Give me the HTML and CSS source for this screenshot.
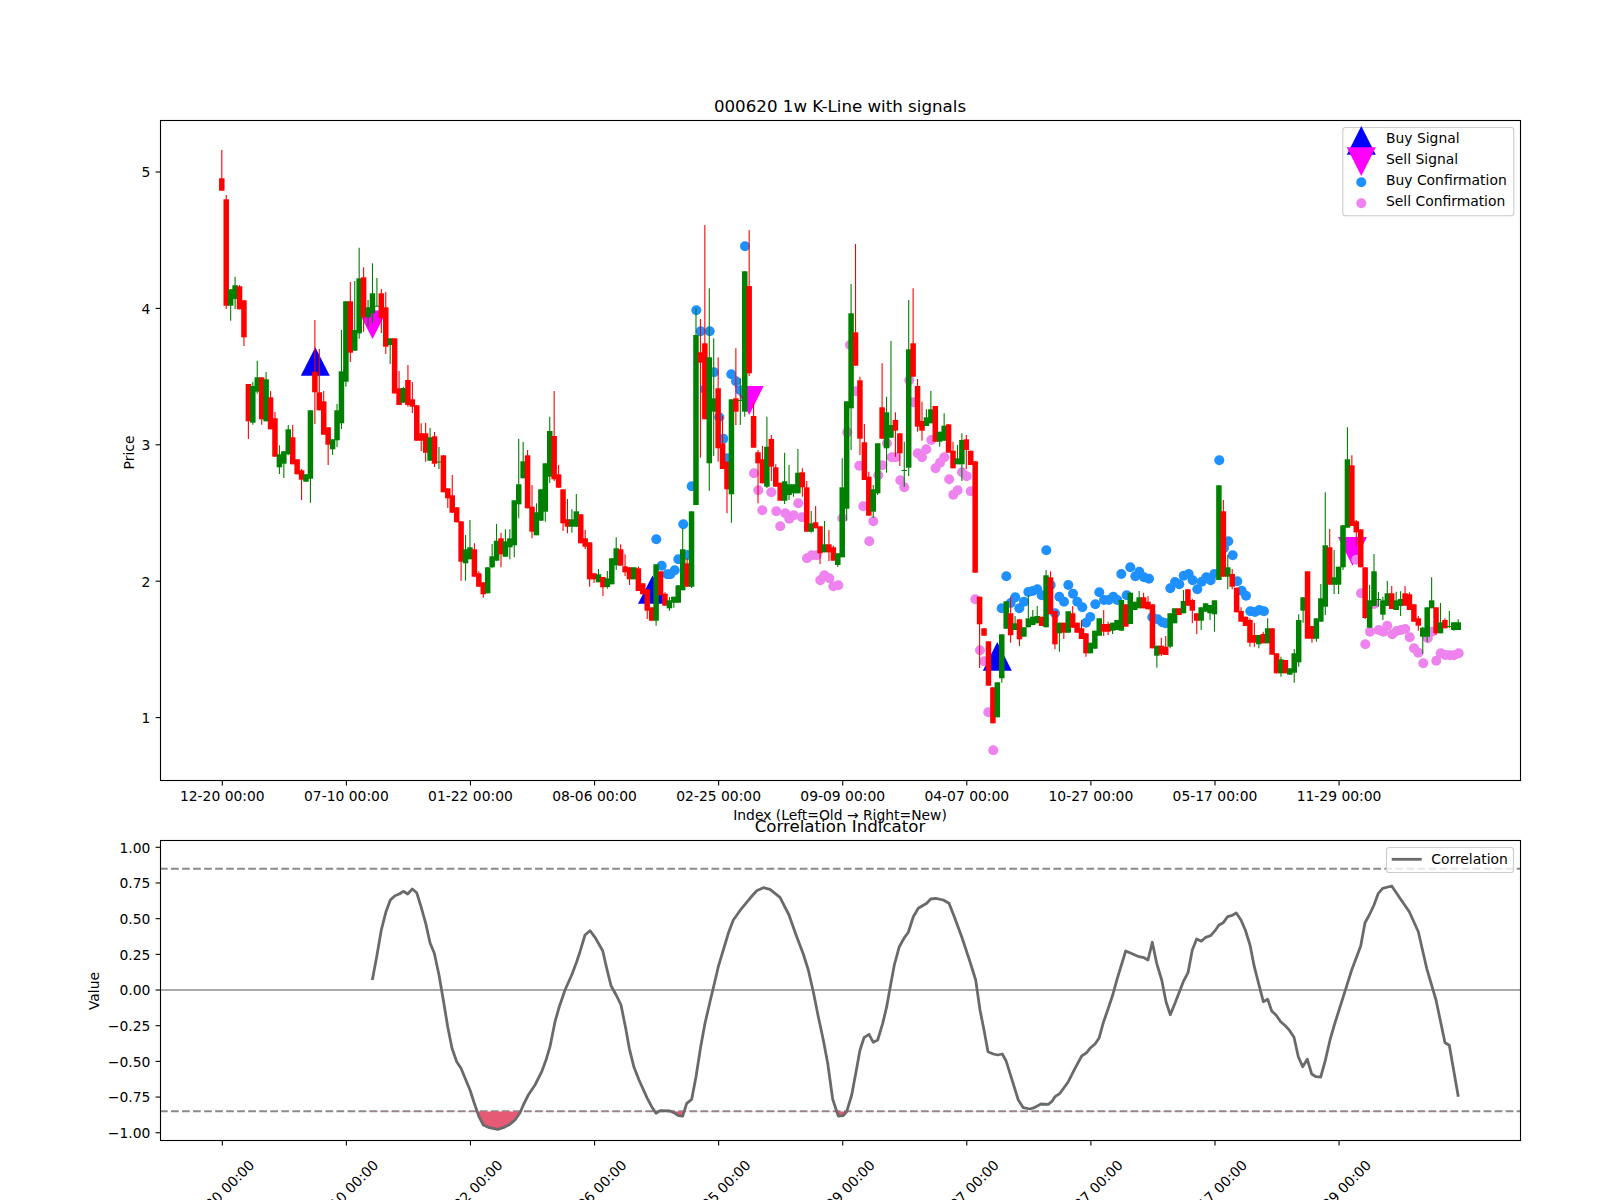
FILE: index.html
```html
<!DOCTYPE html>
<html lang="en">
<head>
<meta charset="utf-8">
<title>000620 1w K-Line with signals</title>
<link rel="stylesheet" href="styles.css">
</head>
<body>
<svg class="figure" id="figure" xmlns="http://www.w3.org/2000/svg" width="1600" height="1200" viewBox="0 0 1600 1200">
  <defs>
    <clipPath id="below-band"><rect x="160" y="1111.3" width="1360" height="29"></rect></clipPath>
  </defs>

  <g id="price-axes">
    <g id="signals"></g>
    <g id="confirmations"></g>
    <g id="candles"></g>
    <rect class="frame" x="160.5" y="120.5" width="1360" height="660"></rect>
    <g id="price-ticks"></g>
    <text class="title" x="840" y="112">000620 1w K-Line with signals</text>
    <text class="label centered" x="840" y="820">Index (Left=Old → Right=New)</text>
    <text class="label centered" transform="translate(133.5 452.5) rotate(-90)">Price</text>
    <g class="legend">
      <rect class="legend-box" x="1342.8" y="127.5" width="171" height="88.2" rx="2.8"></rect>
      <polygon class="buy" points="1361.3,126 1375.8,154.7 1346.8,154.7"></polygon>
      <polygon class="sell" points="1346.8,147.3 1375.8,147.3 1361.3,176"></polygon>
      <circle class="buy-dot" cx="1361.3" cy="182.3" r="5"></circle>
      <circle class="sell-dot" cx="1361.3" cy="203.3" r="5"></circle>
      <text class="label" x="1386" y="143">Buy Signal</text>
      <text class="label" x="1386" y="164">Sell Signal</text>
      <text class="label" x="1386" y="185">Buy Confirmation</text>
      <text class="label" x="1386" y="206">Sell Confirmation</text>
    </g>
  </g>

  <g id="corr-axes">
    <line class="zero" x1="160" y1="990" x2="1520" y2="990"></line>
    <line class="band" x1="160" y1="868.7" x2="1520" y2="868.7"></line>
    <line class="band" x1="160" y1="1111.3" x2="1520" y2="1111.3"></line>
    <path id="corr-fill" class="corr-fill" clip-path="url(#below-band)"></path>
    <path id="corr-line" class="corr-line"></path>
    <rect class="frame" x="160.5" y="840.5" width="1360" height="300"></rect>
    <g id="corr-ticks"></g>
    <text class="title" x="840" y="832">Correlation Indicator</text>
    <text class="label centered" transform="translate(98.5 991) rotate(-90)">Value</text>
    <g class="legend">
      <rect class="legend-box" x="1386.5" y="847.5" width="127" height="25" rx="2.8"></rect>
      <line class="corr-line" x1="1391.7" y1="859.3" x2="1421.7" y2="859.3"></line>
      <text class="label" x="1431.3" y="864">Correlation</text>
    </g>
  </g>
</svg>
<script src="script.js"></script>
</body>
</html>
```
FILE: styles.css
```css
html, body {
  margin: 0;
  padding: 0;
  background: #ffffff;
}
.figure {
  display: block;
  width: 1600px;
  height: 1200px;
  overflow: hidden;
}
.frame {
  fill: none;
  stroke: #000000;
  stroke-width: 1.1;
}
.tick {
  stroke: #000000;
  stroke-width: 1.1;
}
.title, .label, .tick-label {
  font-family: "DejaVu Sans", sans-serif;
  fill: #000000;
}
.title {
  font-size: 16.67px;
  text-anchor: middle;
}
.label, .tick-label {
  font-size: 13.89px;
}
.centered {
  text-anchor: middle;
}
.tick-label-x {
  text-anchor: middle;
}
.tick-label-y {
  text-anchor: end;
}
.legend-box {
  fill: #ffffff;
  fill-opacity: 0.8;
  stroke: #cccccc;
  stroke-width: 1.1;
}
.buy { fill: #0000ff; }
.sell { fill: #ff00ff; }
.buy-dot { fill: #1e90ff; }
.sell-dot { fill: #ee82ee; }
.up { fill: #ff0000; }
.down { fill: #008000; }
.wick-up { stroke: #ff0000; stroke-width: 1.1; }
.wick-down { stroke: #008000; stroke-width: 1.1; }
.zero {
  stroke: #aaaaaa;
  stroke-width: 2;
}
.band {
  stroke: #8a8a8a;
  stroke-width: 2.08;
  stroke-dasharray: 7.7 3.33;
}
.corr-line {
  fill: none;
  stroke: #6a6a6a;
  stroke-width: 2.8;
  stroke-linejoin: round;
}
.corr-fill {
  fill: #e65a76;
}
```
FILE: script.js
```js
var NS = "http://www.w3.org/2000/svg";
function el(parent, tag, attrs, text) {
  var n = document.createElementNS(NS, tag);
  for (var k in attrs) n.setAttribute(k, attrs[k]);
  if (text) n.textContent = text;
  parent.appendChild(n);
  return n;
}
function $(id) { return document.getElementById(id); }

var X0 = 221.8, STEP = 4.4316;
/* up(1=red)/down(0=green), wick top, body top, body bottom, wick bottom */
var C = [
[1,150,178.3,190.7,190.7],[1,195,199.3,305.7,309],[0,289.3,289.3,305.7,320.7],[0,276.7,285.3,299,309],[1,285,286.3,309.3,309.3],[1,300.3,300.3,337.3,346],
[1,384,384,421.3,439],[0,382,386,422.7,424.7],[0,360.7,377.3,391.7,393.7],[1,377.3,377.3,419.3,424.7],[0,372,379.3,421.3,421.3],[1,391,397.3,429.3,429.3],
[1,412,418.3,456.7,456.7],[0,445.3,454.3,467.3,474],[0,451.3,451.3,463.7,478],[0,425,429.3,454.3,455.3],[1,425,437.3,464.3,464.3],[1,459.3,459.3,474.3,474.3],
[1,469,470.3,479.7,500],[0,474.3,474.3,481.7,481.7],[0,410.3,410.3,478.7,502.7],[1,320,371.7,392.3,424],[1,349,392.3,410.3,410.3],[1,391,401.3,434.7,434.7],
[1,427.3,427.3,444.7,465],[0,439.3,439.3,449.3,455],[0,404,410.3,440.3,447],[0,330,371.3,423.3,429],[0,301.3,301.3,381.7,386.7],[1,282,301.3,352.7,362],
[0,281,330,350.7,350.7],[0,247.7,278.3,333.3,338.7],[1,267.3,277.3,317.3,331.7],[0,300,307.3,317.3,327],[0,263.3,293.3,313.3,322.7],[0,278,305.7,306.7,306],
[1,289,293.3,318,333],[1,292,307.3,346.7,354],[0,338.3,338.3,345,364],[1,338.3,338.3,393.5,393.5],[1,371,388.3,405,405],[0,386.7,388,402.7,402.7],
[1,365,380,405,406.7],[1,382,399.3,406.7,413],[1,405.3,405.3,440.7,440.7],[1,423.3,433.3,440.7,451],[1,422.7,433.3,452.7,461.7],[0,428,437.3,460.7,460.7],
[1,432,436.3,463.7,467],[0,447,461.5,462.5,469],[1,455.3,455.3,492.3,492.3],[1,488.3,488.3,498.3,508],[1,475,495.3,512.7,513],[1,507.3,507.3,522.3,522.3],
[1,521.3,521.3,561.7,580.7],[0,535,549.3,563.3,580.7],[0,520,547.3,559.3,559.3],[1,543.3,549.3,576.7,576.7],[1,571.3,573.3,586.7,586.7],[1,582.3,582.3,594.3,597.7],
[0,567.3,567.3,593.3,593.3],[0,544,556.3,567.3,568.3],[0,524,540.7,560.7,560.7],[1,532.7,538.3,554.3,567.3],[0,529.3,541.3,556.7,556.7],[0,529.3,538.3,547.3,559.3],
[0,500.3,500.3,545.3,557.3],[0,438.7,484.3,504.3,518.3],[0,442,461.3,478.3,478.3],[1,450,455.3,508.3,508.3],[1,485,506.7,531.7,538.3],[0,503.3,512.3,535.3,535.3],
[0,489.3,489.3,520.7,520.7],[0,463.3,463.3,511.7,521.7],[0,416.7,431,476.7,483],[1,391,436,479.3,481],[1,465,474.3,487.7,487.7],[1,489.3,489.3,523.3,531],
[1,499,519.3,526.7,533.3],[0,509.3,519.3,526.7,532.7],[0,494,511.3,526.7,526.7],[1,514.3,514.3,543.3,543.3],[1,530,538.3,546.7,549],[1,542.3,542.3,579.3,586.7],
[1,573.3,573.3,579.3,583],[0,569,574.3,582.3,582.3],[1,577,577,587.3,596],[0,571,578.3,587,588.7],[0,558.3,558.3,584.3,584.3],[0,537.3,548.3,565.3,570],
[1,544.3,549.3,565.7,565.7],[1,554.3,566.3,572.3,576],[1,567.3,567.3,579.3,585],[0,567.3,567.3,579.3,579.3],[1,566.5,568.3,591,591],[1,583.3,583.3,594.3,594.3],
[1,589.3,589.3,610.7,619],[1,607.3,607.3,620.7,620.7],[0,564.3,564.3,620.7,625.7],[1,571.3,571.3,595.3,595.3],[1,592.3,593.7,605.7,605.7],[0,597,600.3,608.3,610.7],
[0,596.7,596.7,602.7,607.7],[0,585.3,585.3,602.7,602.7],[0,528.3,549.3,590.3,590.3],[1,558.3,563.3,586.7,586.7],[0,511.3,511.3,586.7,588],[0,308.3,335,505,505],
[1,319,352.3,362.7,457.7],[1,225,343.3,419.3,419.3],[0,288.3,357.3,463.3,490.7],[0,338.3,398.3,411.7,456],[1,357.3,388.3,448.3,461.7],[1,416,443.3,469,469],
[1,461.7,461.7,489.3,513.3],[0,399.3,399.3,494.3,522.7],[1,348.3,398.3,411.7,425],[0,378.3,400,401,425],[0,271.3,271.3,411.7,416.7],[1,230,286,373.3,376],
[1,403.3,416,447.7,447.7],[1,450,452.3,463.3,503.3],[1,446,459.3,483.3,483.3],[0,416.7,446.7,486.7,488],[1,435,439,466.7,481],[1,464.3,467.3,486.7,486.7],
[1,482.7,482.7,500.7,500.7],[0,452.7,481.3,500.7,504],[0,465,484.3,495,500],[0,484.3,484.3,493.3,496.7],[0,449,472.7,493.3,493.3],[1,468.3,472.3,487.3,496.7],
[1,481,487.3,531.7,531.7],[0,511,523.3,531.7,532.7],[1,506,522.3,528.3,528.3],[1,526.3,526.3,553.3,564],[0,521,544.3,552.3,552.3],[1,530,544.3,552.3,561],
[1,545.7,547.3,560.7,560.7],[0,553.3,553.3,565,567],[0,458.3,487.3,557.3,557.3],[0,401.3,401.3,508.7,520.7],[0,284,313.3,408.3,450],[1,244,332.3,365.7,365.7],
[1,376.7,380.3,438.7,455],[1,424,442.3,480,480],[1,471.7,476.7,515.7,515.7],[0,485,489.3,511.7,518],[0,443.3,443.3,493.3,495],[1,363.3,407.3,438.7,438.7],
[0,396.7,412.3,448.3,472.7],[0,341,425,437.7,437.7],[1,412.3,420,430.7,456.7],[1,433.3,433.3,453.3,466],[0,441.7,470,471,486.7],[0,300,349.3,467.7,476],
[1,288.3,343.3,376.7,376.7],[1,379,386,426.7,431.7],[1,401.7,421,430.7,440.7],[0,409.3,417.3,426,426],[0,391,409.3,423.3,423.3],[1,406,406,441.7,441.7],
[0,431.7,431.7,441.7,446.7],[0,413.3,425.7,440.7,440.7],[1,424.3,424.3,452.7,452.7],[1,441.7,450.7,468.3,468.3],[0,445,458.3,464.3,464.3],[0,433.3,440,464.3,481],
[1,435,439.3,450,469],[1,450.7,450.7,465,465],[1,461.3,461.3,572.7,572.7],[1,596.7,596.7,624.3,668],[1,628.3,628.3,635.7,635.7],[1,641.3,641.3,685.7,685.7],
[1,687.3,687.3,723.3,723.3],[0,682.3,682.3,717.3,717.3],[0,634.3,634.3,678.3,682.7],[0,601.3,601.3,628.7,628.7],[1,596.7,613.3,635.3,642.7],[0,616,623.3,630,630],
[1,619.3,619.3,639.3,646],[0,627.3,627.3,636.7,636.7],[0,595,618.3,627.3,627.3],[0,610,616.7,625,625],[0,606,616,623.3,623.3],[1,616.7,616.7,626,626],
[0,570,575.3,627.3,627.3],[1,571.3,577.3,614.3,614.3],[1,611,611,644.3,649.3],[0,622.7,622.7,633.3,651.7],[1,622.7,622.7,632.7,639],[0,611.3,611.3,632.7,632.7],
[1,606,613.3,627.7,627.7],[1,622.7,622.7,632.7,632.7],[1,620,628.3,639,639],[1,633.3,633.3,653.3,656.7],[0,642.7,642.7,653.3,653.3],[0,630.7,630.7,648.7,648.7],
[0,618.3,618.3,635.7,635.7],[1,610,624,631.7,636],[1,621.7,624,631.7,635],[0,622.7,622.7,630.7,634],[0,620,620,630,630],[0,600,600,630.7,630.7],
[1,604.3,604.3,626.7,626.7],[0,592.7,592.7,624,624],[0,601.7,601.7,610,610],[0,591,597.3,608.3,608.3],[1,592.7,597.3,608.3,608.3],[1,596,601.7,609.3,609.3],
[1,604.3,604.3,648.3,648.3],[0,645.7,645.7,655.7,667.7],[1,637.7,645.7,654.3,656],[1,636,646.7,655,655],[0,613.3,613.3,646.7,648.3],[0,608.3,608.3,623.3,623.3],
[1,608.3,608.3,615,615],[0,590,601,613.3,613.3],[1,589.3,589.3,605.7,605.7],[1,598.7,600,610.7,623.3],[1,613.3,613.3,620.7,634],[0,607.3,607.3,620.7,630],
[0,603.3,603.3,611.7,611.7],[0,605,605,613.3,620],[0,600.3,600.3,614.3,631.7],[0,485.3,485.3,580,580],[1,500,511.3,576.7,576.7],[0,555,567.3,576.7,589.3],
[1,569,574,586.7,589.3],[1,587.7,587.7,612.3,612.3],[1,607.3,611,621.7,621.7],[1,616.7,616.7,626,626],[1,618.3,620,642.7,646.7],[1,622.7,635,642.7,646.7],
[0,635,635,644.3,648.3],[1,631.7,634,643.3,643.3],[0,618.3,628.3,643.3,643.3],[1,628.3,628.3,654.7,654.7],[1,653.3,653.3,673.3,673.3],[0,656.7,659.3,673.3,676.7],
[1,660,660,673.3,673.3],[0,668.3,668.3,674.7,674.7],[0,649,653.3,672.7,682.7],[0,614.3,620,662.3,666.7],[0,597.3,597.3,610.7,622.7],[1,571.3,571.3,638.7,638.7],
[1,626,626,638.7,642.7],[0,618.3,618.3,638.7,641.7],[0,584,598.3,621.7,621.7],[0,492.3,545.3,606.7,615],[1,529,547.3,584.7,584.7],[0,550,577.3,584.7,594],
[0,566.7,566.7,584.7,594],[0,525.3,525.3,567.3,570],[0,427.3,459.3,527.7,527.7],[1,455.3,465.3,526,526],[1,520,521.3,532.3,545.7],[1,529.3,529.3,567.3,567.3],
[1,567.3,567.3,618,619],[0,585,600.3,627.7,627.7],[0,554,571.3,606,606],[0,592,599,600,606.7],[0,596.7,600.3,614.7,620],[0,581,593.3,606,606],
[1,586,593.3,609,609],[0,591.7,600.3,610,610],[0,591.3,599,606,616],[1,586,593.3,605.7,605.7],[1,592.3,594.3,610,610],[1,604.3,604.3,621.7,621.7],
[1,616,618.3,625.7,630.7],[0,626.7,627.7,636.7,654],[0,607.3,607.3,636.7,641.7],[0,577.3,600.3,608.3,608.3],[1,607.3,607.3,633.3,635],[0,603,622.3,633.3,633.3],
[1,618.3,620,628.3,628.3],[0,611,626,627,628.3],[0,622.3,622.3,630,630.7],[0,619.3,622.3,630,630]
];

/* confirmation dots, [x, y] */
var BUY = [[656.3,539.3],[661.7,565.7],[667.3,574.3],[670.3,574.3],[674.7,570.3],[678.3,559.3],[683.3,524.3],[687.3,555],[691.7,486.3],[696.3,310.3],[700.7,331.3],[705,389.3],[709.7,331.3],[714,372.3],[719.3,417.3],[723.3,438.7],[726.7,458.3],[731.3,374.3],[736,381.3],[740.3,390.3],[745,246.3],
[1001.7,608.3],[1006.3,576.3],[1010.7,603],[1015.3,597.3],[1019.3,608.3],[1024,601.7],[1028.3,592],[1032.7,591],[1037.3,589.3],[1041.7,595.3],[1046.3,550.3],[1050.7,585],[1055,613.3],[1059.3,596.7],[1064,601.7],[1068.3,585],[1073,593.7],[1077.3,601.7],[1082.3,607.3],[1086,622.7],[1090.3,617],[1095.3,604.3],[1099.3,592.3],[1104,600],[1108.7,600],[1113.3,596.7],[1117.3,600],[1121.3,574],[1126.7,595.3],[1130.3,567.3],[1135.3,576.3],[1139.3,571.7],[1144,577.3],[1149,578.7],[1152.3,617.3],[1157.7,619.3],[1162.3,622.3],[1165.7,623.3],[1170.3,588.3],[1175,582],[1179.3,584.3],[1183.7,575.7],[1188.7,574],[1192.7,580.3],[1197.3,589.3],[1201.7,581.7],[1206.3,577.3],[1210.7,580.3],[1214.3,574],[1219.3,460.3],[1224,548],[1228.3,541.3],[1232.7,555.3],[1237.3,581.3],[1241.7,590.7],[1246,595.7],[1250.3,611.3],[1255,612],[1259.3,610],[1264,611.3]];
var SELL = [[754,473.3],[758.3,490.3],[762.3,510.3],[771.3,492.3],[776.3,511.3],[780.3,526.3],[785.3,513.3],[789.3,518.7],[793.7,515.3],[798.3,503.3],[802,517.3],[807,558.3],[811.7,555.3],[816.7,555.3],[820.3,580.3],[824.3,575.3],[829.3,578.3],[833.3,586.3],[838.3,585.3],[842.3,518.3],[847.3,432.3],[850,345],[855.7,391.3],[859.3,465.7],[863.3,506.3],[869.3,541.3],[873.3,521.3],[878.3,475.3],[882.3,465.3],[887,443.3],[891.7,457.3],[895.7,457.3],[900.3,480.3],[904.3,487.3],[909.3,380.3],[913.3,402.3],[917.7,453.3],[922,457.3],[926.3,449.3],[931.3,440],[935.5,468.3],[940,462.8],[944.3,457.3],[949.2,479.3],[953.3,494.7],[957.7,490.3],[962,472.3],[966.7,476.3],[970.7,491.3],[975.3,599.3],[980,650.3],[984.3,661.3],[988.3,712.3],[993.3,750.3],
[1356.3,559.7],[1361,593.3],[1365.3,644.3],[1370,631.7],[1374.3,604],[1378.7,630],[1383.3,631.7],[1387.3,625.7],[1392.3,634.3],[1396.7,631],[1401,630],[1405.3,629],[1409.7,637.3],[1414,648.3],[1418.3,652.7],[1423.3,663.3],[1427.7,638.3],[1432,631.7],[1436.3,660.7],[1440.7,653.3],[1445.3,655],[1449.7,655.3],[1454,655.3],[1458.7,653.3]];

/* correlation line, three traced stretches: [x origin, y origin, points in 1/3 px] */
var CORR = [
[80,760,[877,660,890,590,904,510,918,455,931,420,945,407,958,402,970,394,983,402,997,387,1010,398,1023,440,1037,490,1050,548,1063,580,1077,645,1090,720,1103,800,1116,865,1130,905,1143,925,1170,990,1183,1030,1197,1070,1210,1095,1225,1102,1253,1108,1270,1103,1290,1093,1305,1080,1320,1058,1330,1035,1345,1005,1365,975,1385,935,1398,900,1410,860,1425,785,1438,740]],
[560,820,[15,510,35,465,50,425,60,395,75,345,90,332,105,352,128,392,140,445,153,497,170,528,183,555,197,625,208,685,222,742,237,780,262,835,275,860,288,880,300,872,330,873,345,880,355,887,368,888,380,850,395,838,408,770,422,680,435,610,450,545,462,495,475,440,490,390,505,340,520,300,545,265,570,235,590,212,610,203,630,208,660,232,687,285,710,350,730,402,745,450,760,515,775,590,790,660,803,730,818,838,835,888,850,887,860,875,875,825,890,745,900,690,912,653,927,643,940,667,953,660,968,610,980,560,990,505,1003,435,1018,380,1032,355,1045,337,1060,290,1075,265,1100,250,1112,237,1127,235,1150,240,1167,250,1183,290,1205,350,1230,425,1247,480,1260,570,1272,630,1284,695,1300,702,1313,705,1327,702,1338,722,1353,770,1375,840,1390,863,1410,867,1425,862,1443,852,1465,853,1475,845,1485,830,1500,820]],
[1040,820,[85,785,105,745,125,708,140,698,150,685,165,672,177,655,190,608,205,565,218,525,232,475,257,393,280,403,297,410,312,413,324,420,337,367,350,430,365,480,378,545,391,584,405,550,430,485,444,458,457,390,470,357,484,364,497,352,512,347,525,332,537,315,550,308,563,290,577,286,589,279,603,300,616,330,630,375,643,440,657,495,670,545,683,538,695,573,708,585,722,605,736,617,749,632,762,652,775,710,788,740,802,718,815,762,828,770,842,771,855,725,870,660,883,615,910,530,935,450,962,378,975,308,988,285,1002,255,1015,220,1028,205,1055,198,1080,235,1108,275,1135,335,1160,445,1188,540,1215,668,1228,676,1255,830]]
];

var DATES = ["12-20 00:00","07-10 00:00","01-22 00:00","08-06 00:00","02-25 00:00","09-09 00:00","04-07 00:00","10-27 00:00","05-17 00:00","11-29 00:00"];

function tri(parent, cls, x, y1, y2) {
  var p = x + "," + y1 + " " + (x + 14.5) + "," + y2 + " " + (x - 14.5) + "," + y2;
  el(parent, "polygon", { "class": cls, points: p });
}
tri($("signals"), "buy", 315.3, 347.3, 375.7);
tri($("signals"), "buy", 652.5, 575.5, 603.7);
tri($("signals"), "buy", 997.3, 642, 670.7);
el($("signals"), "polygon", { "class": "sell", points: "358,310.6 387,310.6 372.5,339" });
el($("signals"), "polygon", { "class": "sell", points: "734.7,386 763.7,386 749.2,415" });
el($("signals"), "polygon", { "class": "sell", points: "1338,537 1367,537 1352.5,565.7" });

BUY.forEach(function (d) { el($("confirmations"), "circle", { "class": "buy-dot", cx: d[0], cy: d[1], r: 5 }); });
SELL.forEach(function (d) { el($("confirmations"), "circle", { "class": "sell-dot", cx: d[0], cy: d[1], r: 5 }); });

C.forEach(function (c, i) {
  var x = X0 + STEP * i, g = $("candles");
  el(g, "line", { "class": c[0] ? "wick-up" : "wick-down", x1: x, x2: x, y1: c[1], y2: c[4] });
  el(g, "rect", { "class": c[0] ? "up" : "down", x: x - 2.75, width: 5.5, y: c[2], height: Math.max(c[3] - c[2], 1) });
});

var pts = [];
CORR.forEach(function (s) {
  for (var k = 0; k < s[2].length; k += 2) {
    pts.push((s[0] + s[2][k] / 3).toFixed(1) + " " + (s[1] + s[2][k + 1] / 3).toFixed(1));
  }
});
var line = "M" + pts.join("L");
$("corr-line").setAttribute("d", line);
$("corr-fill").setAttribute("d", line + "L1458 1111.3L365 1111.3Z");

DATES.forEach(function (t, i) {
  var x = X0 + 28 * STEP * i + 0.5;
  el($("price-ticks"), "line", { "class": "tick", x1: x, x2: x, y1: 780.5, y2: 785.4 });
  el($("price-ticks"), "text", { "class": "tick-label tick-label-x", x: x, y: 801 }, t);
  el($("corr-ticks"), "line", { "class": "tick", x1: x, x2: x, y1: 1140.5, y2: 1145.4 });
  el($("corr-ticks"), "text", { "class": "tick-label tick-label-x", transform: "translate(" + (x + 3) + " 1196) rotate(-45)" }, t);
});
[[5, 172], [4, 308.4], [3, 444.8], [2, 581.2], [1, 717.6]].forEach(function (p) {
  el($("price-ticks"), "line", { "class": "tick", x1: 155.6, x2: 160.5, y1: p[1], y2: p[1] });
  el($("price-ticks"), "text", { "class": "tick-label tick-label-y", x: 150.3, y: p[1] + 5.3 }, String(p[0]));
});
["1.00", "0.75", "0.50", "0.25", "0.00", "−0.25", "−0.50", "−0.75", "−1.00"].forEach(function (t, i) {
  var y = 847.3 + 35.68 * i;
  el($("corr-ticks"), "line", { "class": "tick", x1: 155.6, x2: 160.5, y1: y, y2: y });
  el($("corr-ticks"), "text", { "class": "tick-label tick-label-y", x: 150.3, y: y + 5.3 }, t);
});
```
